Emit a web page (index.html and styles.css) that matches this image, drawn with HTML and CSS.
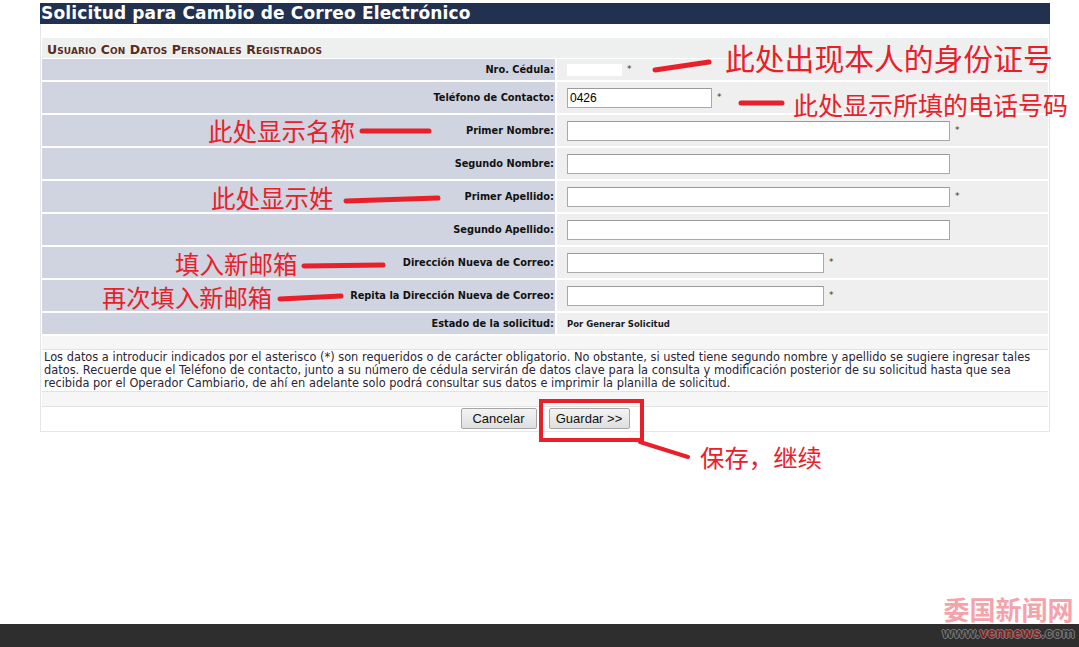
FILE: index.html
```html
<!DOCTYPE html>
<html lang="es">
<head>
<meta charset="utf-8">
<title>Solicitud para Cambio de Correo Electrónico</title>
<link rel="stylesheet" href="styles.css">
</head>
<body>
<div class="page">
  <main class="form">
    <h1 class="title">Solicitud para Cambio de Correo Electrónico</h1>
    <div class="box">
      <div class="spacer"></div>
      <div class="section">Usuario Con Datos Personales Registrados</div>
      <div class="grid">
        <div class="lbl">Nro. Cédula:</div>
        <div class="val"><span class="mask"></span><span class="req">*</span></div>

        <div class="lbl tall">Teléfono de Contacto:</div>
        <div class="val tall"><input class="inp phone" type="text" value="0426"><span class="req">*</span></div>

        <div class="lbl tall">Primer Nombre:</div>
        <div class="val tall"><input class="inp wide" type="text" value=""><span class="req">*</span></div>

        <div class="lbl tall">Segundo Nombre:</div>
        <div class="val tall"><input class="inp wide" type="text" value=""></div>

        <div class="lbl tall">Primer Apellido:</div>
        <div class="val tall"><input class="inp wide" type="text" value=""><span class="req">*</span></div>

        <div class="lbl tall">Segundo Apellido:</div>
        <div class="val tall"><input class="inp wide" type="text" value=""></div>

        <div class="lbl tall">Dirección Nueva de Correo:</div>
        <div class="val tall"><input class="inp mail" type="text" value=""><span class="req">*</span></div>

        <div class="lbl tall">Repita la Dirección Nueva de Correo:</div>
        <div class="val tall"><input class="inp mail" type="text" value=""><span class="req">*</span></div>

        <div class="lbl">Estado de la solicitud:</div>
        <div class="val"><span class="status">Por Generar Solicitud</span></div>
      </div>
      <div class="blank"></div>
      <p class="note">Los datos a introducir indicados por el asterisco (*) son requeridos o de carácter obligatorio. No obstante, si usted tiene segundo nombre y apellido se sugiere ingresar tales<br>datos. Recuerde que el Teléfono de contacto, junto a su número de cédula servirán de datos clave para la consulta y modificación posterior de su solicitud hasta que sea<br>recibida por el Operador Cambiario, de ahí en adelante solo podrá consultar sus datos e imprimir la planilla de solicitud.</p>
      <div class="blank low"></div>
      <div class="actions">
        <button class="btn cancel" type="button">Cancelar</button>
        <button class="btn save" type="button">Guardar &gt;&gt;</button>
      </div>
    </div>
  </main>

  <svg class="marks" width="1079" height="647" viewBox="0 0 1079 647">
    <g stroke="#e8202a" stroke-width="5" stroke-linecap="round" fill="none">
      <line x1="655" y1="70" x2="709" y2="62"/>
      <line x1="741" y1="103" x2="782" y2="103"/>
      <line x1="362" y1="131" x2="429" y2="131"/>
      <line x1="346" y1="201" x2="438" y2="198"/>
      <line x1="304" y1="266" x2="383" y2="265"/>
      <line x1="280" y1="299" x2="341" y2="296"/>
      <polyline points="640,442 688,457" stroke-width="4"/>
    </g>
    <rect x="541" y="401" width="101" height="39" fill="none" stroke="#e8202a" stroke-width="4"/>
  </svg>

  <span class="note-red n1">此处出现本人的身份证号</span>
  <span class="note-red n2">此处显示所填的电话号码</span>
  <span class="note-red n3">此处显示名称</span>
  <span class="note-red n4">此处显示姓</span>
  <span class="note-red n5">填入新邮箱</span>
  <span class="note-red n6">再次填入新邮箱</span>
  <span class="note-red n7">保存，继续</span>

  <footer class="footer"></footer>

  <div class="watermark">
    <span class="wm-cn">委国新闻网</span>
    <span class="wm-en">www.<b>vennews</b>.com</span>
  </div>
</div>
</body>
</html>
```

FILE: styles.css
```css
html, body {
  margin: 0;
  padding: 0;
  background: #ffffff;
}

.page {
  position: relative;
  width: 1079px;
  height: 647px;
  display: flex;
  flex-direction: column;
  overflow: hidden;
  font-family: "DejaVu Sans", Verdana, sans-serif;
}

.form {
  width: 1010px;
  margin: 3px 0 0 40px;
}

.title {
  margin: 0;
  height: 21px;
  background: #21314f;
  color: #ffffff;
  font-size: 17px;
  font-weight: bold;
  line-height: 21px;
  padding-left: 1px;
  letter-spacing: 0.15px;
}

.box {
  border: 1px solid #e6e6e6;
  border-top: 0;
  padding: 0 1px 0 1px;
}

.spacer {
  height: 14px;
  background: #ffffff;
}

.section {
  height: 20px;
  background: #eef0ef;
  color: #5a2c1e;
  font-size: 12.5px;
  font-weight: bold;
  font-variant: small-caps;
  line-height: 24px;
  padding-left: 5px;
  box-sizing: border-box;
  letter-spacing: 0.1px;
}

.grid {
  display: grid;
  grid-template-columns: 513px 1fr;
  column-gap: 2px;
  row-gap: 2px;
  margin-top: 1px;
}

.lbl {
  height: 21px;
  background: #cfd4e0;
  color: #111111;
  font-size: 9.8px;
  font-weight: bold;
  display: flex;
  align-items: center;
  justify-content: flex-end;
  padding-right: 1px;
}

.val {
  height: 21px;
  background: #eeefee;
  display: flex;
  align-items: center;
  padding-left: 10px;
}

.tall {
  height: 31px;
}

.mask {
  display: inline-block;
  width: 55px;
  height: 12px;
  background: #ffffff;
}

.req {
  font-size: 9px;
  color: #333333;
  margin-left: 5px;
  line-height: 1;
}

.inp {
  box-sizing: border-box;
  height: 20px;
  border: 1px solid #a9a9a9;
  border-top-color: #9a9a9a;
  background: #ffffff;
  font-family: "Liberation Sans", Arial, sans-serif;
  font-size: 12px;
  color: #000000;
  padding: 0 2px;
  margin: 0;
}

.phone { width: 145px; }
.wide { width: 383px; }
.mail { width: 257px; }

.status {
  font-size: 8.5px;
  font-weight: bold;
  color: #1a1a1a;
}

.blank {
  height: 13px;
  margin-top: 2px;
  background: #f6f6f6;
  border-bottom: 1px solid #e2e2e2;
}

.blank.low {
  margin-top: 0;
  height: 14px;
  border-top: 1px solid #e2e2e2;
}

.note {
  margin: 0;
  padding: 1px 2px 1px 2px;
  font-size: 11.4px;
  line-height: 13px;
  color: #2b2436;
  letter-spacing: 0;
  white-space: nowrap;
  background: #ffffff;
}

.actions {
  display: flex;
  justify-content: center;
  gap: 12px;
  padding: 1px 0 2px 0;
}

.btn {
  height: 21px;
  padding: 0;
  font-family: "Liberation Sans", Arial, sans-serif;
  font-size: 13px;
  color: #111111;
  background: linear-gradient(#f4f4f4, #dedede);
  border: 1px solid #a6a6a6;
  border-radius: 2px;
  text-align: center;
}

.cancel { width: 76px; }
.save { width: 81px; }

.marks {
  position: absolute;
  left: 0;
  top: 0;
  pointer-events: none;
}

.note-red {
  position: absolute;
  color: #e8202a;
  font-family: "Noto Sans CJK SC", sans-serif;
  white-space: nowrap;
  line-height: 1;
}

.n1 { left: 725px; top: 43px; font-size: 29.8px; }
.n2 { left: 793px; top: 92px; font-size: 25px; }
.n3 { left: 208px; top: 119px; font-size: 24.5px; }
.n4 { left: 211px; top: 186px; font-size: 24.5px; }
.n5 { left: 175px; top: 252px; font-size: 24.5px; }
.n6 { left: 102px; top: 285px; font-size: 24.3px; }
.n7 { left: 700px; top: 445px; font-size: 24.4px; }

.footer {
  margin-top: auto;
  height: 23px;
  background: #2e2e2e;
}

.watermark {
  position: absolute;
  left: 942px;
  top: 595px;
  width: 133px;
  display: flex;
  flex-direction: column;
  align-items: center;
}

.wm-cn {
  font-family: "Noto Sans CJK SC", sans-serif;
  font-weight: bold;
  font-size: 26px;
  line-height: 28px;
  color: #f4a3ab;
}

.wm-en {
  font-family: "Liberation Sans", Arial, sans-serif;
  font-weight: bold;
  font-size: 14.5px;
  line-height: 20px;
  color: #333333;
  text-shadow: 1px 0 0 #7c7c7c, -1px 0 0 #7c7c7c, 0 1px 0 #7c7c7c, 0 -1px 0 #7c7c7c;
}

.wm-en b {
  color: #8a1c1c;
}
```
